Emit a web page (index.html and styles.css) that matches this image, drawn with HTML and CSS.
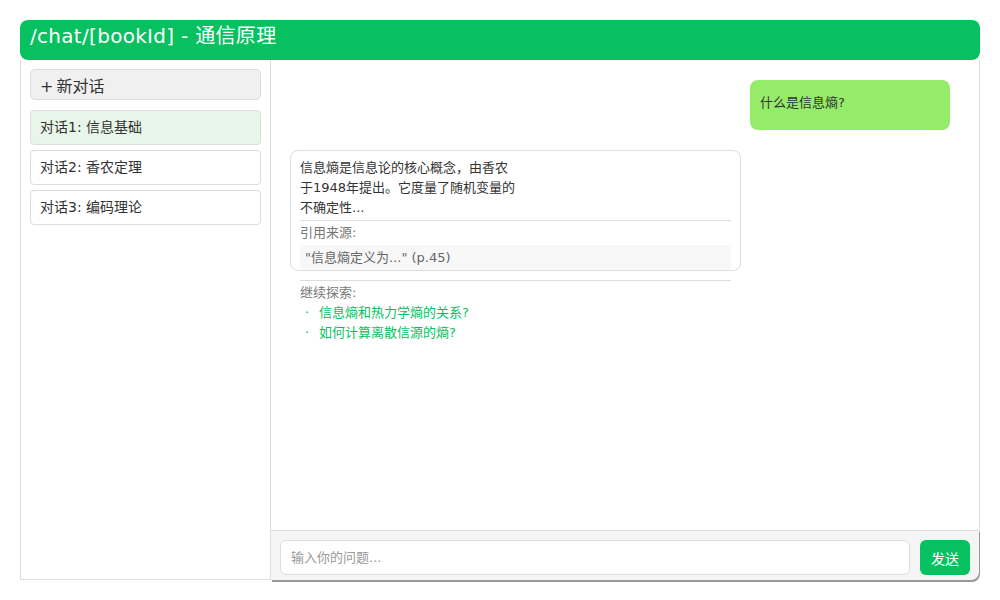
FILE: index.html
```html
<!DOCTYPE html>
<html lang="zh">
<head>
    <meta charset="UTF-8">
    <title>/chat/[bookId] - 通信原理</title>
    <link rel="stylesheet" href="styles.css">
</head>
<body>
    <div class="app">
        <header class="app-header">/chat/[bookId] - 通信原理</header>

        <div class="app-body">
            <aside class="sidebar">
                <button class="new-chat">+ 新对话</button>
                <div class="chat-item active">对话1: 信息基础</div>
                <div class="chat-item">对话2: 香农定理</div>
                <div class="chat-item">对话3: 编码理论</div>
            </aside>

            <main class="chat">
                <div class="messages">
                    <div class="msg-user">什么是信息熵?</div>

                    <div class="msg-bot">
                        <div class="bot-text">信息熵是信息论的核心概念，由香农<br>于1948年提出。它度量了随机变量的<br>不确定性...</div>
                        <div class="sources">
                            <div class="section-label">引用来源:</div>
                            <div class="quote">"信息熵定义为..." (p.45)</div>
                        </div>
                        <div class="explore">
                            <div class="section-label">继续探索:</div>
                            <a class="follow-up" href="#">信息熵和热力学熵的关系?</a>
                            <a class="follow-up" href="#">如何计算离散信源的熵?</a>
                        </div>
                    </div>
                </div>

                <div class="input-bar">
                    <input class="question" type="text" placeholder="输入你的问题...">
                    <button class="send">发送</button>
                </div>
            </main>
        </div>
    </div>
</body>
</html>
```

FILE: styles.css
```css
body {
    margin: 0;
    padding: 20px;
    background-color: #fff;
    font-family: "DejaVu Sans", "Noto Sans CJK SC", sans-serif;
    color: #333;
}

.app {
    width: 960px;
    height: 560px;
    display: flex;
    flex-direction: column;
}

.app-header {
    height: 40px;
    line-height: 32px;
    padding: 0 10px;
    background-color: #07c160;
    color: #fff;
    font-size: 20px;
    letter-spacing: 0.3px;
    border-radius: 8px;
    box-sizing: border-box;
}

.app-body {
    flex: 1;
    display: flex;
    min-height: 0;
}

.sidebar {
    width: 251px;
    padding: 9px;
    border: 1px solid #ddd;
    border-top: none;
    box-sizing: border-box;
    display: flex;
    flex-direction: column;
    gap: 5px;
}

.new-chat {
    height: 31px;
    margin-bottom: 5px;
    padding: 0 9px;
    text-align: left;
    font-family: inherit;
    font-size: 16px;
    word-spacing: -2px;
    color: #333;
    background-color: #f0f0f0;
    border: 1px solid #ddd;
    border-radius: 5px;
}

.chat-item {
    height: 35px;
    line-height: 33px;
    padding: 0 9px;
    font-size: 14px;
    border: 1px solid #ddd;
    border-radius: 4px;
    box-sizing: border-box;
}

.chat-item.active {
    background-color: #e8f5e9;
}

.chat {
    flex: 1;
    display: flex;
    flex-direction: column;
    border-right: 1px solid #ddd;
    border-bottom-right-radius: 8px;
}

.messages {
    flex: 1;
    padding: 20px 29px 20px 19px;
    display: flex;
    flex-direction: column;
    align-items: flex-start;
    gap: 20px;
}

.msg-user {
    align-self: flex-end;
    width: 200px;
    height: 50px;
    line-height: 46px;
    padding: 0 10px;
    box-sizing: border-box;
    background-color: #95ec69;
    border-radius: 8px;
    font-size: 13px;
}

.msg-bot {
    width: 451px;
    height: 121px;
    padding: 7px 9px 0;
    box-sizing: border-box;
    border: 1px solid #ddd;
    border-radius: 8px;
    font-size: 13px;
}

.bot-text {
    line-height: 20px;
    padding-bottom: 2px;
}

.sources {
    border-top: 1px solid #ddd;
    padding-top: 2px;
}

.section-label {
    color: #777;
    line-height: 20px;
}

.quote {
    margin-top: 2px;
    height: 25px;
    line-height: 25px;
    padding: 0 5px;
    color: #666;
    background-color: #f8f8f8;
    border-radius: 4px;
}

.explore {
    margin-top: 10px;
    padding-top: 2px;
    border-top: 1px solid #ddd;
    display: flex;
    flex-direction: column;
}

.follow-up {
    color: #07c160;
    text-decoration: none;
    line-height: 20px;
}

.follow-up::before {
    content: "·";
    display: inline-block;
    width: 14px;
    padding-left: 5px;
}

.input-bar {
    height: 50px;
    padding: 9px 9px 5px 9px;
    box-sizing: border-box;
    display: flex;
    gap: 10px;
    background-color: #f5f5f5;
    border-top: 1px solid #ddd;
    border-bottom-right-radius: 8px;
    box-shadow: 1px 2px 0 #999;
}

.question {
    flex: 1;
    padding: 0 10px;
    font-family: inherit;
    font-size: 13px;
    border: 1px solid #ddd;
    border-radius: 6px;
    outline: none;
}

.question::placeholder {
    color: #999;
}

.send {
    width: 50px;
    font-family: inherit;
    font-size: 14px;
    color: #fff;
    background-color: #07c160;
    border: none;
    border-radius: 6px;
}
```
